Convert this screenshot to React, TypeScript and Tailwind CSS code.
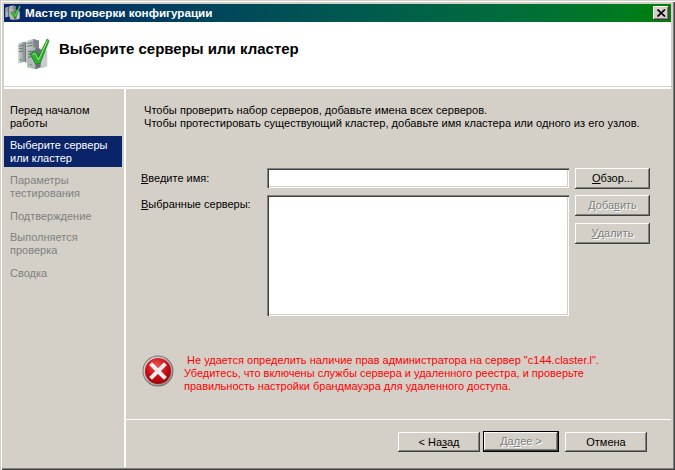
const btn = "flex items-center justify-center bg-[#d4d0c8] text-[11px] leading-none shadow-[inset_-1px_-1px_0_#404040,inset_1px_1px_0_#ffffff,inset_-2px_-2px_0_#808080]";
const dis = "text-[#808080] [text-shadow:1px_1px_0_#ffffff]";
const sunken = "bg-white shadow-[inset_1px_1px_0_#808080,inset_2px_2px_0_#404040,inset_-1px_-1px_0_#ffffff,inset_-2px_-2px_0_#d4d0c8]";

function ServerIcon({ size }: { size: number }) {
  return (
    <svg width={size} height={size} viewBox="0 0 36 36">
      <defs>
        <linearGradient id={`s${size}`} x1="0" x2="1" y1="0" y2="0">
          <stop offset="0" stopColor="#d8dcdc" />
          <stop offset="1" stopColor="#8a9090" />
        </linearGradient>
      </defs>
      <path d="M1 6 L8 4 L8 26 L1 28 Z" fill={`url(#s${size})`} />
      <path d="M8 4 L13 6 L13 28 L8 26 Z" fill="#70787a" />
      <path d="M10 3 L18 1 L24 3 L24 27 L18 29 L10 27 Z" fill={`url(#s${size})`} />
      <path d="M18 1 L24 3 L24 27 L18 29 Z" fill="#7c8486" />
      <path d="M11 12 L20 10 L26 12 L26 32 L20 34 L11 32 Z" fill="#b4baba" />
      <path d="M20 10 L26 12 L26 32 L20 34 Z" fill="#6c7476" />
      <path d="M26 12 L33 14 L33 31 L26 33 Z" fill="#c8cccc" />
      <path d="M2 9 L7 8 M2 12 L7 11 M2 15 L7 14 M11 6 L17 5 M11 9 L17 8 M12 15 L19 14 M12 18 L19 17 M12 21 L19 20" stroke="#5f6668" strokeWidth="1" />
      <circle cx="4" cy="24" r="1" fill="#3fae3f" />
      <circle cx="15" cy="29" r="1" fill="#3fae3f" />
      <path d="M14 17 L20 14 L23 21 L33 1 L35 3 L25 28 L20 28 Z" fill="#2faf2f" stroke="#0f7a1f" strokeWidth="0.8" />
      <path d="M17 18 L20 17 L23.5 24 L33 3" fill="none" stroke="#a6ee7a" strokeWidth="1" />
    </svg>
  );
}

function ErrorIcon() {
  return (
    <svg width="32" height="32" viewBox="0 0 32 32">
      <defs>
        <radialGradient id="r" cx="0.45" cy="0.3" r="0.8">
          <stop offset="0" stopColor="#f05050" />
          <stop offset="0.55" stopColor="#c50d14" />
          <stop offset="1" stopColor="#8c0408" />
        </radialGradient>
        <linearGradient id="ring" x1="0" x2="1" y1="0" y2="1">
          <stop offset="0" stopColor="#e8e4e4" />
          <stop offset="1" stopColor="#8a8080" />
        </linearGradient>
      </defs>
      <circle cx="16" cy="16" r="15.5" fill="#7a6f6f" />
      <circle cx="16" cy="16" r="14.6" fill="url(#ring)" />
      <circle cx="16" cy="16" r="13" fill="url(#r)" />
      <path d="M10 10 L22 22 M22 10 L10 22" stroke="#f2eeee" strokeWidth="4" strokeLinecap="square" />
    </svg>
  );
}

function NavItem({ lines, state, extra = "" }: { lines: string[]; state: "normal" | "active" | "off"; extra?: string }) {
  const cls =
    state === "active"
      ? "bg-[#0a246a] text-white"
      : state === "off"
      ? "text-[#808080]"
      : "text-black";
  return (
    <div className={`${cls} ${extra} pl-[6px] pt-[3px] pb-[2px] text-[11px] leading-[13px]`}>
      {lines.map((l) => (
        <div key={l}>{l}</div>
      ))}
    </div>
  );
}

export default function App() {
  return (
    <div
      className="w-[675px] h-[470px] overflow-hidden flex flex-col bg-[#d4d0c8] pt-[4px] pl-[4px] pr-[4px] pb-[3px] shadow-[inset_1px_1px_0_#d4d0c8,inset_2px_2px_0_#ffffff,inset_-1px_-1px_0_#404040,inset_-2px_-2px_0_#808080]"
      style={{ fontFamily: '"Liberation Sans", Arial, sans-serif' }}
    >
      <div className="h-[18px] shrink-0 flex items-center bg-gradient-to-r from-[#0a246a] to-[#008000] pl-[1px] pr-[2px]">
        <ServerIcon size={16} />
        <span className="ml-[4px] text-white font-bold text-[11.7px] leading-none">Мастер проверки конфигурации</span>
        <div className="ml-auto w-[16px] h-[14px] bg-[#d4d0c8] flex items-center justify-center shadow-[inset_-1px_-1px_0_#404040,inset_1px_1px_0_#ffffff,inset_-2px_-2px_0_#808080]">
          <svg width="9" height="8" viewBox="0 0 9 8"><path d="M0.5 0.5 L8 7.5 M8 0.5 L0.5 7.5" stroke="#000" strokeWidth="1.7" /></svg>
        </div>
      </div>
      <div className="h-[65px] shrink-0 bg-white flex items-center pl-[13px] border-b border-[#d4d0c8]">
        <ServerIcon size={33} />
        <span className="ml-[9px] font-bold text-[15px] leading-none text-black mb-[12px]">Выберите серверы или кластер</span>
      </div>
      <div className="h-[2px] shrink-0 bg-white" />
      <div className="flex-1 flex min-h-0">
        <div className="w-[118px] shrink-0 pt-[12px] flex flex-col gap-[4px] mr-[2px]">
          <NavItem lines={["Перед началом", "работы"]} state="normal" />
          <NavItem lines={["Выберите серверы", "или кластер"]} state="active" />
          <NavItem lines={["Параметры", "тестирования"]} state="off" />
          <NavItem lines={["Подтверждение"]} state="off" extra="mt-[1px] mb-[-1px]" />
          <NavItem lines={["Выполняется", "проверка"]} state="off" />
          <NavItem lines={["Сводка"]} state="off" extra="mt-[1px]" />
        </div>
        <div className="w-[2px] shrink-0 bg-white" />
        <div className="flex-1 flex flex-col min-w-0">
          <div className="flex-1 flex flex-col pl-[18px] pt-[15px] text-[11px] leading-[13px] text-black">
            <div className="h-[26px] whitespace-nowrap text-[11.1px]">
              <div>Чтобы проверить набор серверов, добавьте имена всех серверов.</div>
              <div>Чтобы протестировать существующий кластер, добавьте имя кластера или одного из его узлов.</div>
            </div>
            <div className="flex mt-[38px]">
              <div className="w-[126px] ml-[-3px] pt-[4px]">
                <div className="h-[26px]"><u>В</u>ведите имя:</div>
                <div><u>В</u>ыбранные серверы:</div>
              </div>
              <div className="w-[302px]">
                <div className={`h-[20px] ${sunken}`} />
                <div className={`h-[121px] mt-[7px] ${sunken}`} />
              </div>
              <div className="ml-[6px] w-[75px] flex flex-col">
                <div className={`h-[21px] ${btn}`}><span><u>О</u>бзор...</span></div>
                <div className={`h-[21px] mt-[6px] ${btn} ${dis}`}><span>Доба<u>в</u>ить</span></div>
                <div className={`h-[21px] mt-[7px] ${btn} ${dis}`}><span><u>У</u>далить</span></div>
              </div>
            </div>
            <div className="flex mt-[38px] ml-[-2px] items-start">
              <div className="mt-[1px]"><ErrorIcon /></div>
              <div className="ml-[10px] text-[#ff0000] whitespace-nowrap">
                <div>&nbsp;Не удается определить наличие прав администратора на сервер "c144.claster.l".</div>
                <div>Убедитесь, что включены службы сервера и удаленного реестра, и проверьте</div>
                <div>правильность настройки брандмауэра для удаленного доступа.</div>
              </div>
            </div>
          </div>
          <div className="h-[48px] shrink-0 border-t border-white flex items-start pl-[272px] pt-[11px]">
            <div className={`w-[82px] h-[20px] mt-[1px] ${btn}`}><span>&lt; На<u>з</u>ад</span></div>
            <div className="h-[21px] w-[76px] ml-[3px] border border-black">
              <div className={`h-full ${btn} ${dis}`}><span><u>Д</u>а<u>л</u>ее &gt;</span></div>
            </div>
            <div className={`w-[82px] h-[20px] mt-[1px] ml-[6px] ${btn}`}><span>Отмена</span></div>
          </div>
        </div>
      </div>
    </div>
  );
}
